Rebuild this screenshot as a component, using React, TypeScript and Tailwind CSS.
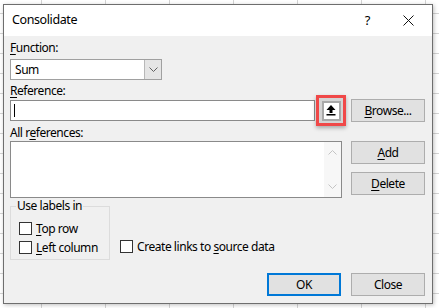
import React from "react";

const font = { fontFamily: '"Noto Sans", "Open Sans", sans-serif' };

const U = ({ children }: { children: React.ReactNode }) => (
  <span className="underline underline-offset-[2px] decoration-[1px]">{children}</span>
);

const Button = ({ children, primary }: { children: React.ReactNode; primary?: boolean }) => (
  <div
    className={`w-[74px] flex items-center justify-center bg-[#e1e1e1] text-black ${
      primary ? "h-[23px] border-2 border-[#0078d7]" : "h-[23px] border border-[#adadad]"
    }`}
  >
    {children}
  </div>
);

const Checkbox = ({ children }: { children: React.ReactNode }) => (
  <div className="flex items-center h-[13px] gap-[4px]">
    <div className="w-[13px] h-[13px] border border-[#333333] bg-white shrink-0" />
    <span className="leading-[13px] whitespace-nowrap">{children}</span>
  </div>
);

export default function App() {
  return (
    <div
      className="relative w-[439px] h-[308px] overflow-hidden bg-white bg-[linear-gradient(to_right,#d4d4d4_1px,transparent_1px),linear-gradient(to_bottom,#d4d4d4_1px,transparent_1px)] bg-[size:64px_20px] bg-[position:41px_13px]"
      style={font}
    >
      <div className="absolute left-[3px] top-[4px] w-[430px] h-[300px] border border-[#6e6e6e] bg-[#f0f0f0] flex flex-col text-[12px] tracking-[-0.45px] text-black shadow-[1px_1px_4px_rgba(0,0,0,0.25)]">
        {/* title bar */}
        <div className="h-[31px] bg-white flex items-center pl-[8px] shrink-0">
          <span className="text-[12.5px] tracking-[-0.4px]">Consolidate</span>
          <span className="ml-auto text-[13px] mr-[33px]">?</span>
          <svg width="11" height="11" viewBox="0 0 11 11" className="mr-[18px]">
            <path d="M0.5 0.5L10.5 10.5M10.5 0.5L0.5 10.5" stroke="#111" strokeWidth="1" />
          </svg>
        </div>

        <div className="flex flex-col pl-[6px] pr-[7px]">
          <div className="h-[16px] leading-[16px] mt-[4px]">
            <U>F</U>unction:
          </div>
          <div className="mt-[3px] w-[152px] h-[21px] border border-[#a0a0a0] bg-white flex">
            <div className="flex-1 pl-[4px] leading-[19px]">Sum</div>
            <div className="w-[17px] h-full bg-[#e5e5e5] border-l border-[#b8b8b8] flex items-center justify-center">
              <svg width="9" height="5" viewBox="0 0 9 5">
                <path d="M0.5 0.5L4.5 4.5L8.5 0.5" stroke="#606060" fill="none" strokeWidth="1" />
              </svg>
            </div>
          </div>

          <div className="h-[16px] leading-[16px] mt-[3px]">
            <U>R</U>eference:
          </div>
          <div className="mt-[1px] h-[21px] flex items-center">
            <div className="w-[306px] h-[21px] border border-[#8a8a8a] bg-white flex items-center pl-[3px]">
              <div className="w-px h-[13px] bg-black" />
            </div>
            <div className="ml-[1px] w-[30px] h-[31px] shrink-0 border-[3px] border-[#f04848] bg-[#d4d4d4] flex items-center justify-center shadow-[0_2px_4px_rgba(0,0,0,0.3)]">
              <div className="w-[19px] h-[20px] border-2 border-[#a8a8a8] bg-white flex items-center justify-center">
                <svg width="10" height="11" viewBox="0 0 10 11">
                  <path d="M5 0L9.5 5H6.5V8H3.5V5H0.5Z" fill="#000" />
                  <rect x="0.5" y="9" width="9" height="1.5" fill="#000" />
                </svg>
              </div>
            </div>
            <div className="ml-[5px]">
              <Button>
                <span>
                  <U>B</U>rowse...
                </span>
              </Button>
            </div>
          </div>

          <div className="h-[16px] leading-[16px] mt-[4px]">
            All r<U>e</U>ferences:
          </div>
          <div className="flex">
            <div className="w-[332px] h-[57px] border border-[#8a8a8a] bg-white flex justify-end">
              <div className="w-[17px] h-full bg-[#f7f7f7] flex flex-col items-center justify-between py-[8px]">
                <svg width="9" height="5" viewBox="0 0 9 5">
                  <path d="M0.5 4.5L4.5 0.5L8.5 4.5" stroke="#c4c4c4" fill="none" strokeWidth="1" />
                </svg>
                <svg width="9" height="5" viewBox="0 0 9 5">
                  <path d="M0.5 0.5L4.5 4.5L8.5 0.5" stroke="#c4c4c4" fill="none" strokeWidth="1" />
                </svg>
              </div>
            </div>
            <div className="ml-[9px] flex flex-col gap-[8px]">
              <Button>
                <span>
                  <U>A</U>dd
                </span>
              </Button>
              <Button>
                <span>
                  <U>D</U>elete
                </span>
              </Button>
            </div>
          </div>

          <div className="flex mt-[8px]">
            <div className="relative w-[100px] h-[54px] border border-[#dcdcdc] flex flex-col gap-[6px] pl-[8px] pt-[15px]">
              <span className="absolute left-[5px] top-[-9px] bg-[#f0f0f0] px-[1px] leading-[16px]">
                Use labels in
              </span>
              <Checkbox>
                <U>T</U>op row
              </Checkbox>
              <Checkbox>
                <U>L</U>eft column
              </Checkbox>
            </div>
            <div className="ml-[10px] mt-[34px]">
              <Checkbox>
                Create links to <U>s</U>ource data
              </Checkbox>
            </div>
          </div>

          <div className="flex justify-end gap-[10px] mt-[13px]">
            <Button primary>OK</Button>
            <Button>Close</Button>
          </div>
        </div>
      </div>
    </div>
  );
}
